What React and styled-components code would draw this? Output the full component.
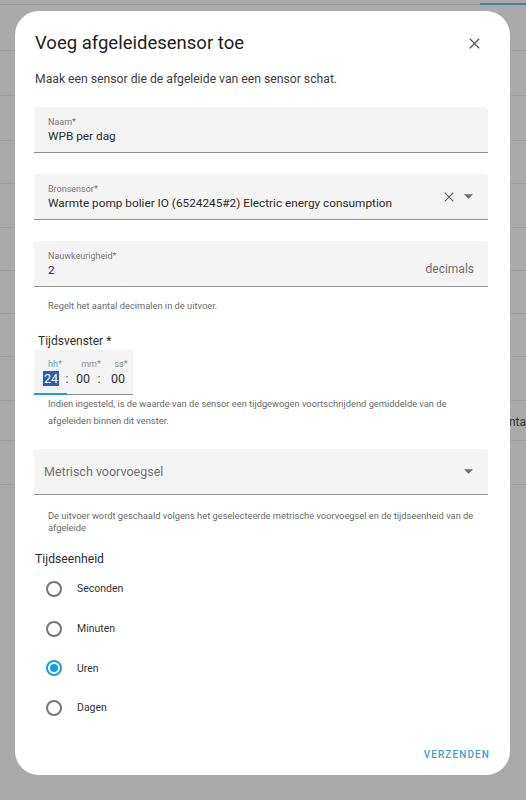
import React from 'react';
import styled, { createGlobalStyle } from 'styled-components';

const GlobalStyle = createGlobalStyle`
  html, body {
    margin: 0;
    padding: 0;
    background: #aaaaaa;
    font-family: Roboto, "Noto Sans", sans-serif;
  }
  * { box-sizing: border-box; }
`;

const PRIMARY = '#1a9be2';

const Page = styled.div`
  position: relative;
  width: 526px;
  height: 800px;
  overflow: hidden;
  background: #aaaaaa;
`;

const TopBar = styled.div`
  height: 5px;
  border-bottom: 1px solid #9c9c9c;
  display: flex;
  justify-content: flex-end;
`;

const TabMark = styled.div`
  width: 46px;
  height: 2px;
  margin-top: 3px;
  background: #4a7f96;
`;

const BgRow = styled.div`
  height: ${p => p.h}px;
  border-bottom: 1px solid #9d9d9d;
  display: flex;
  justify-content: flex-end;
  align-items: flex-end;
  padding-bottom: 11px;
  font-size: 12px;
  color: #333;
`;

const Dialog = styled.div`
  position: absolute;
  left: 15px;
  top: 11px;
  width: 495px;
  height: 764px;
  background: #fff;
  border-radius: 24px;
  padding: 20px 22px 0 19px;
  display: flex;
  flex-direction: column;
`;

const Header = styled.div`
  display: flex;
  align-items: center;
  justify-content: space-between;
  padding-left: 1px;
`;

const Title = styled.h2`
  margin: 0;
  font-size: 18.5px;
  line-height: 24px;
  font-weight: 400;
  color: #212121;
`;

const CloseButton = styled.button`
  border: 0;
  background: none;
  padding: 0;
  margin-right: 8px;
  display: flex;
  cursor: pointer;
`;

const Description = styled.p`
  margin: 16px 0 0 1px;
  font-size: 12.2px;
  line-height: 16px;
  color: #3d3d3d;
`;

const Field = styled.div`
  margin-top: ${p => p.mt}px;
  height: 46px;
  background: #f4f4f4;
  border-radius: 4px 4px 0 0;
  border-bottom: 1px solid #8e8e8e;
  display: flex;
  align-items: center;
  padding: 0 14px 0 14px;
`;

const FieldBody = styled.div`
  flex: 1;
  display: flex;
  flex-direction: column;
  padding-top: 3px;
`;

const FieldLabel = styled.span`
  font-size: 9px;
  line-height: 11px;
  color: #777;
`;

const FieldValue = styled.span`
  font-size: 11.8px;
  line-height: 17px;
  color: #2b2b2b;
`;

const Placeholder = styled.span`
  flex: 1;
  font-size: 12.5px;
  color: #707070;
  margin-left: -4px;
`;

const Suffix = styled.span`
  font-size: 12px;
  color: #6f6f6f;
  align-self: flex-end;
  margin-bottom: 10px;
`;

const Icons = styled.div`
  display: flex;
  align-items: center;
  gap: 10px;
  padding-right: 1px;
`;

const Helper = styled.div`
  margin: ${p => p.mt}px 0 0 14px;
  font-size: 9.3px;
  line-height: ${p => p.lh}px;
  color: #6a6a6a;
`;

const SectionLabel = styled.div`
  margin: ${p => p.mt}px 0 0 ${p => p.ml}px;
  font-size: ${p => p.fs}px;
  line-height: 16px;
  color: #2e2e2e;
`;

const TimeBox = styled.div`
  margin-top: 1px;
  width: 99px;
  height: 45px;
  background: #f4f4f4;
  border-bottom: 1px solid #8e8e8e;
  position: relative;
  display: flex;
  align-items: flex-end;
  padding: 0 0 8px 9px;
`;

const ActiveLine = styled.div`
  position: absolute;
  left: 0;
  bottom: -1px;
  width: 33px;
  height: 2px;
  background: ${PRIMARY};
`;

const TimeUnit = styled.div`
  display: flex;
  flex-direction: column;
  align-items: center;
  width: 16px;
  margin-left: ${p => p.ml || 0}px;
`;

const UnitLabel = styled.span`
  font-size: 9px;
  line-height: 14px;
  white-space: nowrap;
  color: ${p => (p.active ? '#4fa8dd' : '#8a8a8a')};
  transform: translateX(${p => p.shift || 0}px);
`;

const UnitValue = styled.span`
  font-size: 12.5px;
  line-height: 15px;
  color: ${p => (p.selected ? '#fff' : '#333')};
  background: ${p => (p.selected ? '#2a5fb5' : 'transparent')};
  padding: 0 1px;
`;

const Colon = styled.span`
  font-size: 12.5px;
  line-height: 15px;
  color: #555;
  width: 16px;
  text-align: center;
`;

const RadioList = styled.div`
  margin-top: 2px;
  display: flex;
  flex-direction: column;
`;

const RadioRow = styled.label`
  height: 39.7px;
  display: flex;
  align-items: center;
  padding-left: 12px;
  gap: 15px;
  font-size: 10.5px;
  color: #333;
`;

const RadioCircle = styled.span`
  width: 16px;
  height: 16px;
  border-radius: 50%;
  border: 2px solid ${p => (p.checked ? PRIMARY : '#777')};
  display: flex;
  align-items: center;
  justify-content: center;
  &::after {
    content: '';
    width: 8px;
    height: 8px;
    border-radius: 50%;
    background: ${p => (p.checked ? PRIMARY : 'transparent')};
  }
`;

const Actions = styled.div`
  margin-top: auto;
  display: flex;
  justify-content: flex-end;
  padding: 0 0 15px;
  margin-right: -2px;
`;

const SubmitButton = styled.button`
  border: 0;
  background: none;
  padding: 0;
  font-family: Roboto, sans-serif;
  font-size: 10px;
  font-weight: 500;
  letter-spacing: 1.1px;
  color: #3fa0d2;
  cursor: pointer;
`;

const Caret = () => (
  <svg width="9" height="5" viewBox="0 0 10 5">
    <path d="M0 0h10L5 5z" fill="#707070" />
  </svg>
);

const Cross = ({ size = 11, color = '#555', w = 1.6 }) => (
  <svg width={size} height={size} viewBox="0 0 14 14">
    <path d="M1 1l12 12M13 1L1 13" stroke={color} strokeWidth={w} fill="none" />
  </svg>
);

const rows = [46, 45, 45, 43, 44, 43, 43, 43, 44, 40, 44];
const units = ['Seconden', 'Minuten', 'Uren', 'Dagen'];

export default function App() {
  return (
    <Page>
      <GlobalStyle />
      <TopBar>
        <TabMark />
      </TopBar>
      {rows.map((h, i) => (
        <BgRow key={i} h={h}>{i === 9 ? 'nta' : null}</BgRow>
      ))}

      <Dialog>
        <Header>
          <Title>Voeg afgeleidesensor toe</Title>
          <CloseButton aria-label="Sluiten">
            <Cross />
          </CloseButton>
        </Header>
        <Description>Maak een sensor die de afgeleide van een sensor schat.</Description>

        <Field mt={20}>
          <FieldBody>
            <FieldLabel>Naam*</FieldLabel>
            <FieldValue>WPB per dag</FieldValue>
          </FieldBody>
        </Field>

        <Field mt={21}>
          <FieldBody>
            <FieldLabel>Bronsensor*</FieldLabel>
            <FieldValue>Warmte pomp bolier IO (6524245#2) Electric energy consumption</FieldValue>
          </FieldBody>
          <Icons>
            <Cross size={10} color="#5a5a5a" w={1.5} />
            <Caret />
          </Icons>
        </Field>

        <Field mt={21}>
          <FieldBody>
            <FieldLabel>Nauwkeurigheid*</FieldLabel>
            <FieldValue>2</FieldValue>
          </FieldBody>
          <Suffix>decimals</Suffix>
        </Field>
        <Helper mt={13} lh={12}>Regelt het aantal decimalen in de uitvoer.</Helper>

        <SectionLabel mt={21} ml={4} fs={12}>Tijdsvenster *</SectionLabel>
        <TimeBox>
          <TimeUnit>
            <UnitLabel active shift={4}>hh*</UnitLabel>
            <UnitValue selected>24</UnitValue>
          </TimeUnit>
          <Colon>:</Colon>
          <TimeUnit>
            <UnitLabel shift={8}>mm*</UnitLabel>
            <UnitValue>00</UnitValue>
          </TimeUnit>
          <Colon>:</Colon>
          <TimeUnit ml={3}>
            <UnitLabel shift={3}>ss*</UnitLabel>
            <UnitValue>00</UnitValue>
          </TimeUnit>
          <ActiveLine />
        </TimeBox>
        <Helper mt={0} lh={17}>
          Indien ingesteld, is de waarde van de sensor een tijdgewogen voortschrijdend gemiddelde van de
          afgeleiden binnen dit venster.
        </Helper>

        <Field mt={20}>
          <Placeholder>Metrisch voorvoegsel</Placeholder>
          <Icons>
            <Caret />
          </Icons>
        </Field>
        <Helper mt={15} lh={12}>
          De uitvoer wordt geschaald volgens het geselecteerde metrische voorvoegsel en de tijdseenheid van de
          afgeleide
        </Helper>

        <SectionLabel mt={17} ml={1} fs={12.2}>Tijdseenheid</SectionLabel>
        <RadioList>
          {units.map(u => (
            <RadioRow key={u}>
              <RadioCircle checked={u === 'Uren'} />
              {u}
            </RadioRow>
          ))}
        </RadioList>

        <Actions>
          <SubmitButton>VERZENDEN</SubmitButton>
        </Actions>
      </Dialog>
    </Page>
  );
}
